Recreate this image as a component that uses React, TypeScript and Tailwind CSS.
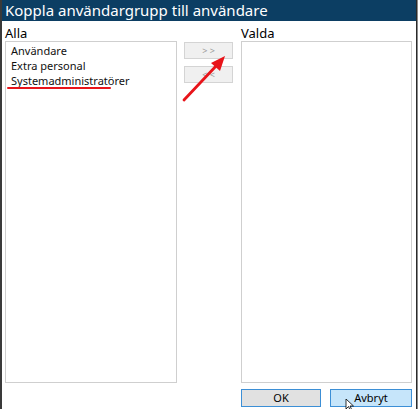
import React from "react";

export default function App() {
  const font = { fontFamily: '"Noto Sans", "Open Sans", sans-serif' };
  return (
    <div className="w-[418px] h-[409px] bg-[#8a8a8a] flex overflow-hidden" style={font}>
      <div className="w-[417px] h-[409px] bg-white flex flex-col border-l-2 border-[#3a3a3a] border-r border-r-[#2a2a2a] relative">
        <div className="h-[21px] bg-[#0c3e63] text-white text-[15px] leading-[21px] pl-[3px] shrink-0">
          Koppla användargrupp till användare
        </div>
        <div className="flex flex-1 pl-[3px] pt-[5px]">
          <div className="flex flex-col w-[172px]">
            <div className="text-[13px] leading-[14px] text-black h-[14px]">Alla</div>
            <div className="border border-[#cfcfcf] h-[342px] mt-[1px] pt-[1px] pl-[5px] text-[11px] leading-[15px] text-[#111]">
              <div>Användare</div>
              <div>Extra personal</div>
              <div>Systemadministratörer</div>
            </div>
          </div>
          <div className="flex flex-col w-[49px] ml-[7px] pt-[16px] gap-[7px]">
            <div className="h-[17px] w-[49px] bg-[#f0f0f0] border border-[#d4d4d4] text-[9px] text-[#9a9a9a] flex items-center justify-center leading-none">
              &gt; &gt;
            </div>
            <div className="h-[17px] w-[49px] bg-[#f0f0f0] border border-[#d4d4d4] text-[9px] text-[#9a9a9a] flex items-center justify-center leading-none">
              &lt; &lt;
            </div>
          </div>
          <div className="flex flex-col w-[171px] ml-[8px]">
            <div className="text-[13px] leading-[14px] text-black h-[14px]">Valda</div>
            <div className="border border-[#cfcfcf] h-[342px] mt-[1px]"></div>
            <div className="flex gap-[9px] mt-[6px]">
              <div className="w-[80px] h-[18px] bg-[#e1e1e1] border border-[#3c8fd6] text-[11px] flex items-center justify-center text-black">
                OK
              </div>
              <div className="w-[82px] h-[18px] bg-[#c6e5fa] border border-[#3c8fd6] text-[11px] flex items-center justify-center text-black">
                Avbryt
              </div>
            </div>
          </div>
        </div>
        <div className="absolute left-[5px] top-[87px] w-[104px] h-[2px] bg-[#e8141a] rounded-full"></div>
        <svg className="absolute left-[-2px] top-0" width="418" height="409">
          <line x1="184" y1="100" x2="217" y2="65" stroke="#e8141a" strokeWidth="2.8" strokeLinecap="round" />
          <polygon points="225,56 211,63 220,71" fill="#e8141a" />
        </svg>
        <svg className="absolute left-[343px] top-[399px]" width="10" height="12" viewBox="0 0 10 12">
          <path d="M1 0 L1 10 L3.5 7.5 L5.5 12 L7 11.3 L5 7 L8.5 7 Z" fill="white" stroke="black" strokeWidth="0.8" />
        </svg>
      </div>
    </div>
  );
}
